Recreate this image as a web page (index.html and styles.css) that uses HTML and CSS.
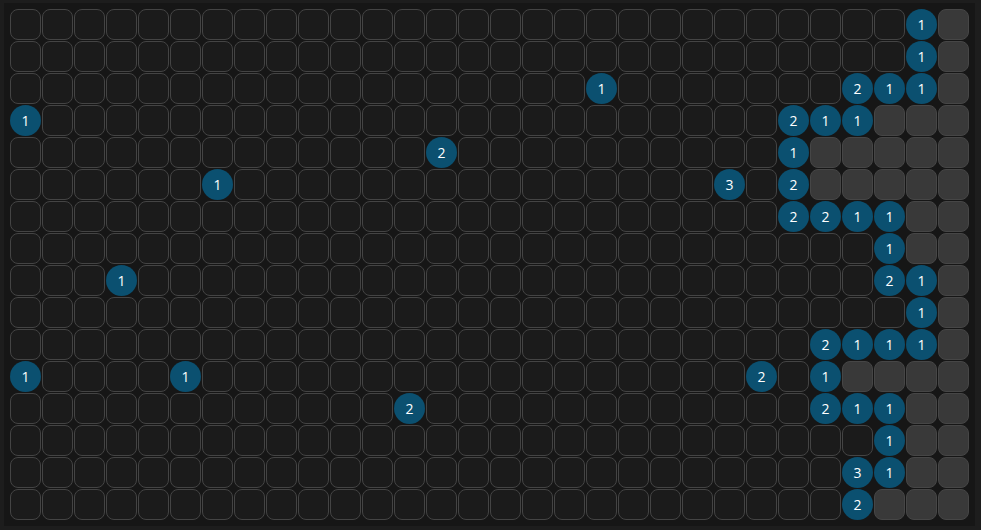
FILE: index.html
```html
<!DOCTYPE html>
<html lang="en">
<head>
<meta charset="utf-8">
<title>Minesweeper</title>
<link rel="stylesheet" href="styles.css">
</head>
<body>
<main class="board" id="board"></main>
<script src="game.js"></script>
</body>
</html>
```

FILE: styles.css
```css
html, body {
  margin: 0;
  padding: 0;
  background: #1d1d1d;
  height: 100%;
  overflow: hidden;
}
body {
  font-family: "Open Sans", "Noto Sans", "Liberation Sans", sans-serif;
}
.board {
  margin: 3px 4px;
  padding: 6px;
  width: max-content;
  background: #161616;
  display: grid;
  grid-template-columns: repeat(30, 31px);
  grid-auto-rows: 31px;
  gap: 1px;
}
.cell {
  box-sizing: border-box;
  border-radius: 8px;
  border: 1px solid #444;
  background: #1b1b1b;
}
.cell.hidden {
  background: #393939;
  border-color: #464646;
}
.cell.num {
  border: none;
  border-radius: 50%;
  background: #0b5070;
  color: #fff;
  font-size: 14px;
  display: flex;
  align-items: center;
  justify-content: center;
  line-height: 1;
}
```

FILE: game.js
```js
var rows = [
  "............................1#",
  "............................1#",
  "..................1.......211#",
  "1.......................211###",
  ".............2..........1#####",
  "......1...............3.2#####",
  "........................2211##",
  "...........................1##",
  "...1.......................21#",
  "............................1#",
  ".........................2111#",
  "1....1.................2.1####",
  "............2............211##",
  "...........................1##",
  "..........................31##",
  "..........................2###"
];
var board = document.getElementById("board");
rows.forEach(function (row) {
  for (var i = 0; i < row.length; i++) {
    var ch = row[i];
    var cell = document.createElement("div");
    cell.className = "cell";
    if (ch === "#") {
      cell.className += " hidden";
    } else if (ch !== ".") {
      cell.className += " num";
      cell.textContent = ch;
    }
    board.appendChild(cell);
  }
});
```
